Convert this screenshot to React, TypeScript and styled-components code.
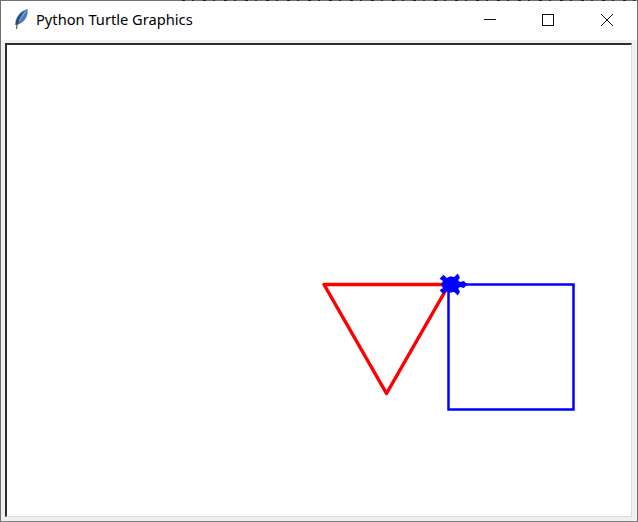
import styled, { createGlobalStyle } from "styled-components";

const GlobalStyle = createGlobalStyle`
  html, body {
    margin: 0;
    padding: 0;
    background: #ffffff;
    overflow: hidden;
  }
`;

const Window = styled.div`
  width: 638px;
  height: 522px;
  box-sizing: border-box;
  display: flex;
  flex-direction: column;
  border-left: 1px solid #707070;
  border-right: 1px solid #707070;
  border-bottom: 1px solid #808080;
  background: #f0f0f0;
  font-family: "Noto Sans", "Open Sans", sans-serif;
`;

const TopEdge = styled.div`
  height: 1px;
  flex: none;
  padding-left: 172px;
  background: #707070;
`;

const TopDashes = styled.div`
  height: 1px;
  background: repeating-linear-gradient(
    90deg,
    #707070 0 9px,
    #1c1c1c 9px 12px,
    #707070 12px 19px,
    #2c2c2c 19px 21px
  );
`;

const TitleBar = styled.div`
  height: 39px;
  flex: none;
  display: flex;
  align-items: flex-start;
  background: #ffffff;
  padding-left: 12px;
  padding-right: 1px;
`;

const AppIcon = styled.svg`
  width: 16px;
  height: 22px;
  flex: none;
  margin-top: 7px;
`;

const Title = styled.span`
  margin-left: 7px;
  flex: 1;
  font-size: 14.67px;
  line-height: 36px;
  color: #000000;
`;

const WindowButton = styled.div<{ $close?: boolean }>`
  width: 58px;
  height: 38px;
  margin-left: ${(props) => (props.$close ? "1px" : "0")};
  display: flex;
  align-items: center;
  justify-content: center;
`;

const Body = styled.div`
  flex: 1;
  display: flex;
  min-height: 0;
  padding: 3px 5px 4px 4px;
`;

const Canvas = styled.div`
  flex: 1;
  min-width: 0;
  background: #ffffff;
  border-top: 2px solid #2e2e2e;
  border-left: 2px solid #2e2e2e;
  border-right: 1px solid #dcdcdc;
  border-bottom: 1px solid #dcdcdc;
`;

const Drawing = styled.svg`
  display: block;
  width: 624px;
  height: 471px;
`;

const turtleShape =
  "0,-16 -2,-14 -1,-10 -4,-7 -7,-9 -9,-8 -6,-5 -7,-1 -5,3 -8,6 -6,8 -4,5 0,7 4,5 6,8 8,6 5,3 7,-1 6,-5 9,-8 7,-9 4,-7 1,-10 2,-14";

const App = () => {
  return (
    <Window>
      <GlobalStyle />
      <TopEdge>
        <TopDashes />
      </TopEdge>
      <TitleBar>
        <AppIcon viewBox="0 0 16 22">
          <path d="M2.5 17 C1.5 10 7 3 14.5 1 C15.5 7 12.5 14 5 16.5 Z" fill="#4a7ab5" />
          <path d="M2.5 17 C3 11 7 5 11 3 C8 7 6 11 5 16.5 Z" fill="#27466e" />
          <path d="M6 13 C8 10 10 7 13 3" stroke="#a9c4e4" strokeWidth="0.8" fill="none" />
          <path d="M3.5 21 L4 16" stroke="#5a5a5a" strokeWidth="1.2" />
        </AppIcon>
        <Title>Python Turtle Graphics</Title>
        <WindowButton>
          <svg width="12" height="12" viewBox="0 0 12 12">
            <path d="M0 5.5H12" stroke="#111" strokeWidth="1" />
          </svg>
        </WindowButton>
        <WindowButton>
          <svg width="12" height="12" viewBox="0 0 12 12">
            <rect x="0.5" y="0.5" width="11" height="11" fill="none" stroke="#111" />
          </svg>
        </WindowButton>
        <WindowButton $close>
          <svg width="12" height="12" viewBox="0 0 12 12">
            <path d="M0 0L12 12M12 0L0 12" stroke="#111" strokeWidth="1" />
          </svg>
        </WindowButton>
      </TitleBar>
      <Body>
        <Canvas>
          <Drawing viewBox="7 45 624 471">
            <path d="M448.5 284.5H573.5V409.5H448.5Z" fill="none" stroke="#0000ff" strokeWidth="2.5" />
            <path d="M449 284.5H324L386.5 393.5L449 284.5" fill="none" stroke="#ff0000" strokeWidth="3.5" strokeLinejoin="round" />
            <polygon
              points={turtleShape}
              transform="translate(449.5 284.5) rotate(90)"
              fill="#0000ff"
              stroke="#0000ff"
              strokeWidth="2.5"
            />
          </Drawing>
        </Canvas>
      </Body>
    </Window>
  );
};

export default App;
